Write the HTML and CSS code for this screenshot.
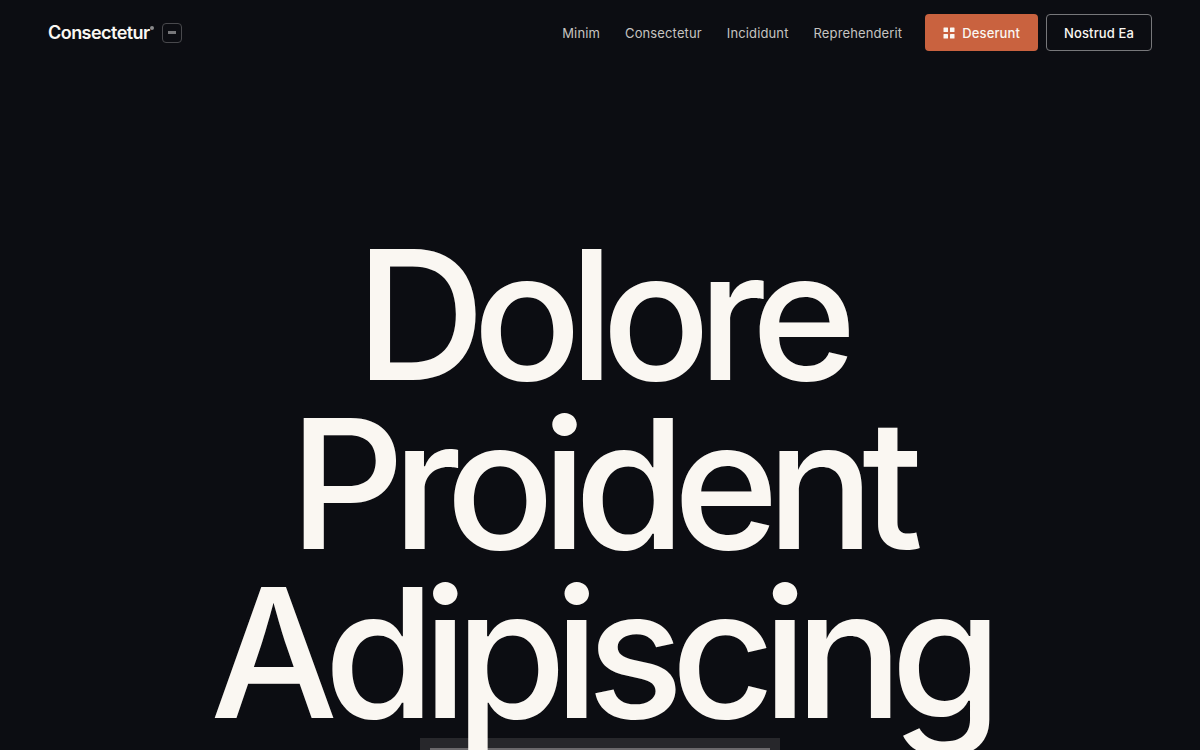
FILE: index.html
```html
<!DOCTYPE html>
<html lang="en">
<head>
  <meta charset="UTF-8">
  <meta name="viewport" content="width=device-width, initial-scale=1.0">
  <title>Consectetur</title>
  <link rel="stylesheet" href="styles.css">
</head>
<body>

  <!-- HEADER -->
  <header class="site-header">
    <div class="brand">
      <a href="#" class="logo">Consectetur<span class="logo-mark"></span></a>
      <button type="button" class="brand-toggle" aria-label="Menu"></button>
    </div>

    <nav class="site-nav">
      <a href="#">Minim</a>
      <a href="#">Consectetur</a>
      <a href="#">Incididunt</a>
      <a href="#">Reprehenderit</a>
    </nav>

    <div class="actions">
      <button type="button" class="btn btn-primary">
        <svg width="12" height="12" viewBox="0 0 12 12" fill="currentColor" aria-hidden="true">
          <rect x="0.5" y="0.5" width="4.5" height="4.5" rx="0.5"/>
          <rect x="7" y="0.5" width="4.5" height="4.5" rx="0.5"/>
          <rect x="0.5" y="7" width="4.5" height="4.5" rx="0.5"/>
          <rect x="7" y="7" width="4.5" height="4.5" rx="0.5"/>
        </svg>
        Deserunt
      </button>
      <button type="button" class="btn btn-outline">Nostrud Ea</button>
    </div>
  </header>

  <!-- HERO -->
  <main class="hero">
    <h1>Dolore<br>Proident<br>Adipiscing</h1>
    <div class="preview">
      <div class="preview-screen"></div>
    </div>
  </main>

</body>
</html>
```
FILE: styles.css
```css
* {
  box-sizing: border-box;
  margin: 0;
  padding: 0;
}
body {
  background: #0c0d12;
  color: #faf7f2;
  font-family: Inter, "Liberation Sans", sans-serif;
}
a {
  color: inherit;
  text-decoration: none;
}
button {
  font: inherit;
  color: inherit;
  cursor: pointer;
}

/* === HEADER === */
.site-header {
  display: flex;
  align-items: center;
  padding: 14px 48px;
  font-size: 13px;
  letter-spacing: 0.01em;
}
.brand {
  display: flex;
  align-items: center;
  gap: 8px;
  margin-right: auto;
}
.logo {
  display: flex;
  font-size: 18px;
  font-weight: 600;
  line-height: 24px;
  letter-spacing: -0.03em;
}
.logo-mark {
  width: 4px;
  height: 4px;
  margin-top: 5px;
  border-radius: 50%;
  background: #8a8a8c;
}
.brand-toggle {
  display: flex;
  align-items: center;
  justify-content: center;
  width: 20px;
  height: 20px;
  border: 1px solid #49494d;
  border-radius: 4px;
  background: none;
}
.brand-toggle::before {
  content: "";
  width: 8px;
  height: 3px;
  background: #77777a;
}
.site-nav {
  display: flex;
  gap: 25px;
  margin-right: 23px;
  color: #c6c4c1;
}
.actions {
  display: flex;
  gap: 8px;
}
.btn {
  display: flex;
  align-items: center;
  gap: 7px;
  height: 37px;
  padding: 0 17px;
  border: 1px solid transparent;
  border-radius: 4px;
  font-weight: 500;
  letter-spacing: inherit;
}
.btn-primary {
  background: #c9623f;
}
.btn-outline {
  background: none;
  border-color: #77777a;
}

/* === HERO === */
.hero {
  height: calc(100vh - 65px);
  padding-top: 165px;
  overflow: hidden;
}
.hero h1 {
  position: relative;
  z-index: 1;
  font-size: 15vw;
  font-weight: 500;
  line-height: 0.94;
  letter-spacing: -0.07em;
  text-align: center;
}
.preview {
  width: 30%;
  margin: 0 auto;
  padding: 10px;
  background: #27272b;
}
.preview-screen {
  aspect-ratio: 16 / 9;
  background: #6b696c;
}
```
